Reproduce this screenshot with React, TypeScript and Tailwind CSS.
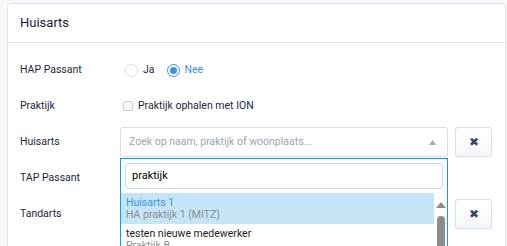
import React from 'react';

const Radio: React.FC<{ checked?: boolean; label: string }> = ({ checked, label }) => (
  <label className="flex items-center gap-[5px]">
    <span
      className={`flex h-[13px] w-[13px] items-center justify-center rounded-full border bg-white ${
        checked ? 'border-[#3b93dd]' : 'border-[#d3dbe7]'
      }`}
    >
      {checked && <span className="h-[7px] w-[7px] rounded-full bg-[#3b93dd]" />}
    </span>
    <span className={checked ? 'text-[#3b8fd8]' : 'text-[#23263a]'}>{label}</span>
  </label>
);

const ClearButton: React.FC = () => (
  <button className="ml-[7px] flex h-[30px] w-[37px] items-center justify-center rounded-[3px] border border-[#d6deec] bg-gradient-to-b from-white to-[#f4f7fb] text-[12px] text-[#35466a]">
    ✖
  </button>
);

const Row: React.FC<{ label: string; children?: React.ReactNode }> = ({ label, children }) => (
  <div className="flex h-[30px] items-center">
    <div className="w-[100px] text-[#23263a]">{label}</div>
    <div className="flex flex-1 items-center">{children}</div>
  </div>
);

export default function App() {
  return (
    <div
      className="h-[246px] overflow-hidden bg-[#f5f7fb] pl-[7px] pr-[1px] pt-[3px] text-[10.5px]"
      style={{ fontFamily: 'Roboto, "Liberation Sans", sans-serif' }}
    >
      <div className="h-[300px] rounded-[3px] border border-[#dfe6f2] bg-white">
        <div className="flex h-[39px] items-center border-b border-[#dfe6f2] px-[12px] text-[13px] text-[#17203a]">
          Huisarts
        </div>
        <div className="flex flex-col gap-[6px] pl-[12px] pr-[12px] pt-[12px]">
          <Row label="HAP Passant">
            <div className="ml-[5px] flex items-center gap-[12px]">
              <Radio label="Ja" />
              <Radio label="Nee" checked />
            </div>
          </Row>
          <Row label="Praktijk">
            <label className="ml-[3px] flex items-center gap-[5px] text-[#23263a]">
              <span className="h-[10px] w-[10px] rounded-[2px] border border-[#c9cfd8] bg-[#f7f8fa]" />
              Praktijk ophalen met ION
            </label>
          </Row>
          <Row label="Huisarts">
            <div className="relative w-[328px]">
              <div className="flex h-[30px] items-center justify-between rounded-[3px] border border-[#d6deec] pl-[8px] pr-[11px] text-[#a0a4ac]">
                <span>Zoek op naam, praktijk of woonplaats...</span>
                <svg width="7" height="5" viewBox="0 0 7 5">
                  <path d="M0 5 L3.5 0 L7 5 Z" fill="#9eadc6" />
                </svg>
              </div>
              <div className="absolute left-0 right-0 top-[31px] z-10 h-[120px] border border-[#0aa1e2] bg-white">
                <div className="p-[4px]">
                  <div className="flex h-[26px] items-center rounded-[3px] border border-[#cbd7ea] pl-[6px] text-[11px] text-black">
                    praktijk
                  </div>
                </div>
                <div className="flex">
                  <div className="flex-1">
                    <div className="flex h-[31px] flex-col justify-center bg-[#c5e4f6] pl-[5px] leading-[12px]">
                      <span className="text-[#3797d9]">Huisarts 1</span>
                      <span className="text-[#8a8f98]">HA praktijk 1 (MITZ)</span>
                    </div>
                    <div className="flex flex-col pl-[5px] pt-[4px] leading-[12px]">
                      <span className="text-[#1d1d1d]">testen nieuwe medewerker</span>
                      <span className="text-[#8a8f98]">Praktijk B</span>
                    </div>
                  </div>
                  <div className="flex w-[13px] flex-col items-center pt-[9px]">
                    <svg width="10" height="6" viewBox="0 0 10 6">
                      <path d="M0 6 L5 0 L10 6 Z" fill="#8a8a8a" />
                    </svg>
                    <div className="mt-[8px] h-[40px] w-[8px] rounded-[4px] bg-[#8c8c8c]" />
                  </div>
                </div>
              </div>
            </div>
            <ClearButton />
          </Row>
          <Row label="TAP Passant" />
          <Row label="Tandarts">
            <div className="w-[328px]" />
            <ClearButton />
          </Row>
        </div>
      </div>
    </div>
  );
}
